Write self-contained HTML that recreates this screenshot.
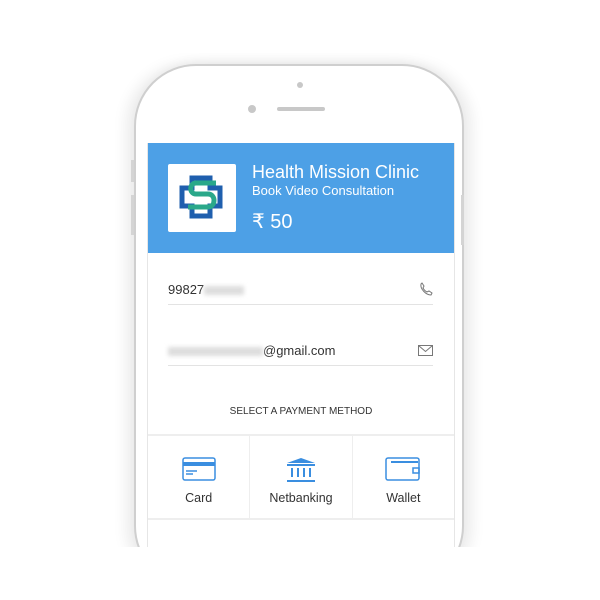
<!DOCTYPE html>
<html style="margin:0;width:600px;height:600px;overflow:hidden"><head><style>
body{margin:0;width:600px;height:600px;background:#fff;position:relative;overflow:hidden;font-family:"Liberation Sans",sans-serif}
.phone{position:absolute;left:134px;top:64px;width:326px;height:520px;border:2px solid #cfcfcf;border-radius:62px;background:#fff;box-shadow:-8px 0 14px rgba(0,0,0,.08),8px 0 14px rgba(0,0,0,.08)}
.cut{position:absolute;left:0;top:547px;width:600px;height:53px;background:#fff}
.btn{position:absolute;background:#d4d4d4;width:3px}
.scr{position:absolute;left:147px;top:143px;width:306px;height:404px;background:#fff;border-left:1px solid #e6e6e6;border-right:1px solid #e6e6e6}
.hdr{position:absolute;left:0;top:0;width:306px;height:110px;background:#4da0e6}
.logo{position:absolute;left:20px;top:21px;width:68px;height:68px;background:#fff;border-radius:2px}
.t{position:absolute;color:#fff}
.field{position:absolute;left:20px;width:265px;border-bottom:1px solid #e3e3e3;font-size:13px;color:#333;height:22px}
.blur{display:inline-block;background:#ddd;filter:blur(2px);height:9px;vertical-align:middle}
.grid{position:absolute;left:0;top:291px;width:306px;height:82px;border-top:2px solid #eee;border-bottom:2px solid #eee;display:flex}
.grid div{flex:1;border-right:1px solid #eee;position:relative;text-align:center;font-size:12.5px;color:#333}
.grid div:last-child{border-right:none}
.grid span{position:absolute;left:0;right:0;top:55px}
.grid svg{position:absolute;left:50%;top:21px;transform:translateX(-50%)}
</style></head><body>
<div class="phone"></div>
<div class="btn" style="left:131px;top:160px;height:22px"></div>
<div class="btn" style="left:131px;top:195px;height:40px"></div>
<div class="btn" style="left:461px;top:195px;height:50px"></div>
<div style="position:absolute;left:297px;top:82px;width:6px;height:6px;border-radius:50%;background:#c8c8c8"></div>
<div style="position:absolute;left:248px;top:105px;width:8px;height:8px;border-radius:50%;background:#c8c8c8"></div>
<div style="position:absolute;left:277px;top:107px;width:48px;height:4px;border-radius:2px;background:#c8c8c8"></div>
<div class="cut"></div>
<div class="scr">
 <div class="hdr">
  <div class="logo"><svg width="68" height="68" viewBox="0 0 68 68">
   <path d="M24 14h18v10h10v18H42v10H24V42H14V24h10z" fill="none" stroke="#1f5fae" stroke-width="5"/>
   <path d="M48 19H28c-7 0-7 11 0 11h12c8 0 8 13 0 13H20" fill="none" stroke="#2aa88a" stroke-width="5"/>
  </svg></div>
  <div class="t" style="left:104px;top:19px;font-size:18px">Health Mission Clinic</div>
  <div class="t" style="left:104px;top:40px;font-size:13px">Book Video Consultation</div>
  <div class="t" style="left:104px;top:66px;font-size:20px">₹ 50</div>
 </div>
 <div class="field" style="top:139px">99827<span class="blur" style="width:40px"></span>
  <svg style="position:absolute;right:0;top:0" width="14" height="14" viewBox="0 0 14 14"><path d="M3 1l2 3-1 2c1 2 2 3 4 4l2-1 3 2-1 2C7 13 1 7 2 2z" fill="none" stroke="#777"/></svg></div>
 <div class="field" style="top:200px"><span class="blur" style="width:95px"></span>@gmail.com
  <svg style="position:absolute;right:0;top:2px" width="15" height="11" viewBox="0 0 15 11"><rect x=".5" y=".5" width="14" height="10" fill="none" stroke="#777"/><path d="M.5 .5l7 6 7-6" fill="none" stroke="#777"/></svg></div>
 <div style="position:absolute;left:0;width:306px;top:263px;text-align:center;font-size:10px;color:#333">SELECT A PAYMENT METHOD</div>
 <div class="grid">
  <div><svg width="34" height="24" viewBox="0 0 34 24"><rect x="1" y="1" width="32" height="22" rx="2" fill="none" stroke="#3a8ee0" stroke-width="1.5"/><rect x="1" y="5" width="32" height="4" fill="#3a8ee0"/><path d="M4 14h11M4 17h7" stroke="#3a8ee0" stroke-width="1.5"/></svg><span>Card</span></div>
  <div><svg width="34" height="26" viewBox="0 0 34 26"><path d="M17 1L3 6h28z" fill="#3a8ee0"/><path d="M3 8h28M3 24h28" stroke="#3a8ee0" stroke-width="2"/><path d="M8 11v9M14 11v9M20 11v9M26 11v9" stroke="#3a8ee0" stroke-width="2"/></svg><span>Netbanking</span></div>
  <div><svg width="36" height="24" viewBox="0 0 36 24"><rect x="1" y="1" width="33" height="22" rx="2" fill="none" stroke="#3a8ee0" stroke-width="1.5"/><path d="M6 5h27" stroke="#3a8ee0" stroke-width="2"/><rect x="28" y="11" width="6" height="5" fill="none" stroke="#3a8ee0" stroke-width="1.5"/></svg><span>Wallet</span></div>
 </div>
</div>
</body></html>
